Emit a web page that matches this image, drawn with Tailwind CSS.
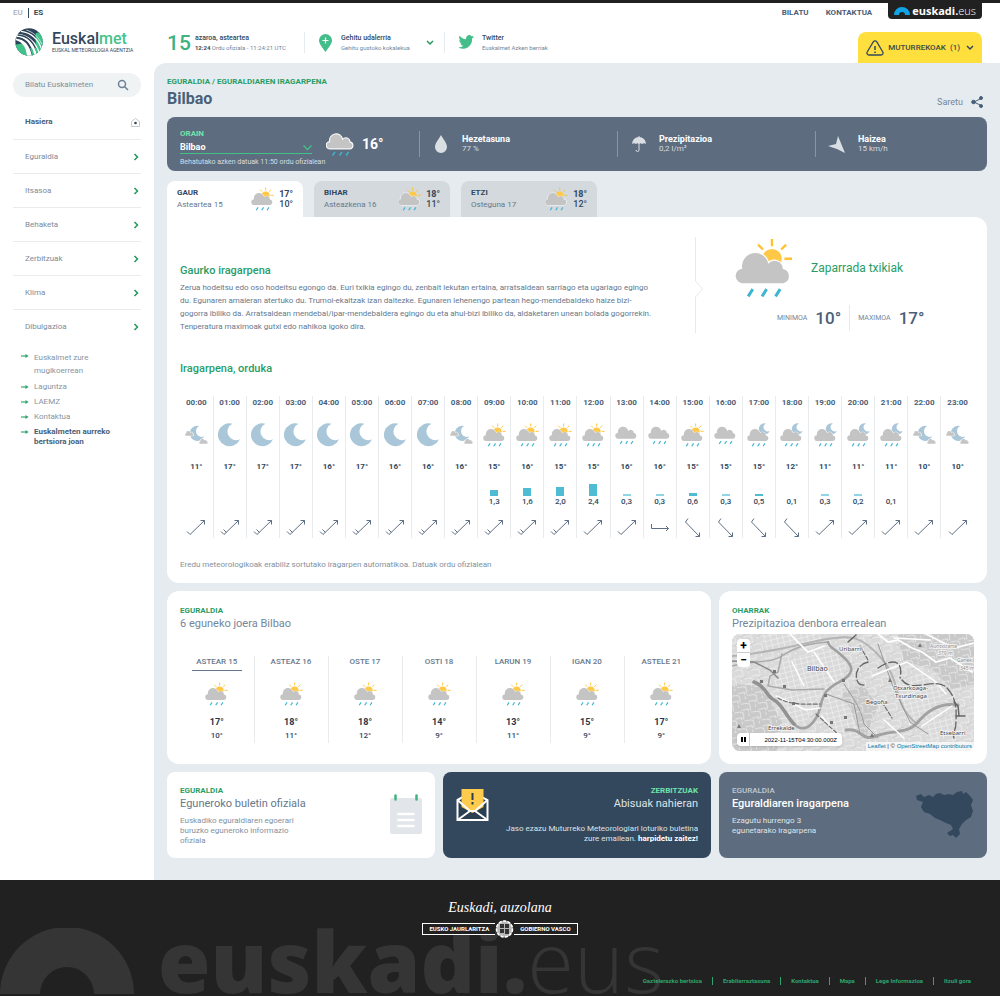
<!DOCTYPE html>
<html lang="eu">
<head>
<meta charset="utf-8">
<meta name="viewport" content="width=device-width, initial-scale=1">
<title>Euskalmet - Eguraldiaren iragarpena - Bilbao</title>
<script src="https://cdn.jsdelivr.net/npm/@tailwindcss/browser@4"></script>
</head>
<body class="bg-white font-['Roboto','Liberation_Sans',sans-serif] text-[8px] leading-[10px] text-[#75869a]">

<!-- Shared icon definitions -->
<svg class="hidden" aria-hidden="true">
  <defs>
    <path id="cloud-shape" d="M22 136 A22 22 0 0 1 18 92 A40 40 0 0 1 97 77 A25 25 0 0 1 141 93 A22 22 0 0 1 143 136 Z"/>
    <g id="rain-shape" stroke="#3fb5d3" stroke-width="9" fill="none"><path d="M50 154 36 176M92 154 78 176M133 154 119 176"/></g>
    <path id="moon-shape" d="M44 1 A36 36 0 1 0 68 50 A27 27 0 0 1 44 1 Z"/>
    <symbol id="sunrain" viewBox="-4 0 176 180">
      <circle cx="108" cy="62" r="30" fill="#ffc947"/>
      <path d="M108 2v22M66 19l15 15M151 19l-15 15M146 62h23" stroke="#ffc12e" stroke-width="7" fill="none"/>
      <use href="#cloud-shape" fill="#c4c4c4" stroke="#ffffff" stroke-width="7" paint-order="stroke"/>
      <use href="#rain-shape"/>
    </symbol>
    <symbol id="rain" viewBox="-4 18 176 180">
      <use href="#cloud-shape" fill="#c4c4c4"/><use href="#rain-shape"/>
    </symbol>
    <symbol id="moonrain" viewBox="-4 0 176 180">
      <use href="#moon-shape" transform="translate(88 0) scale(1.2)" fill="#a9c7d8"/>
      <use href="#cloud-shape" fill="#c4c4c4" stroke="#ffffff" stroke-width="7" paint-order="stroke"/>
      <use href="#rain-shape"/>
    </symbol>
    <symbol id="moon" viewBox="-1 0 72 73"><use href="#moon-shape" fill="#a9c7d8"/></symbol>
    <symbol id="mooncloud" viewBox="-4 0 176 180">
      <use href="#moon-shape" transform="translate(34 20) scale(1.6)" fill="#a9c7d8"/>
      <g fill="#c4c4c4" stroke="#ffffff" stroke-width="20" paint-order="stroke">
        <use href="#cloud-shape" transform="translate(-2 42) scale(.4)" />
        <use href="#cloud-shape" transform="translate(106 102) scale(.4)"/>
      </g>
    </symbol>
    <symbol id="wind1" viewBox="0 0 20 20"><path d="M1 13.500 4 16.500 18.500 2.500M14.500 2.500h4v4" fill="none" stroke="#5d6f84"/></symbol>
    <symbol id="wind2" viewBox="0 0 20 20"><path d="M1 13.500 4 16.500 18.500 2.500M14.500 2.500h4v4M3.500 11.500l3 3" fill="none" stroke="#5d6f84"/></symbol>
    <symbol id="windR" viewBox="0 0 20 20"><path d="M1.500 6v4.500h17M16 8l2.500 2.500-2.500 2.500" fill="none" stroke="#5d6f84"/></symbol>
    <symbol id="windD" viewBox="0 0 20 20"><path d="M5 .5 2.500 4 16.500 18.500M16.500 14.500v4h-4" fill="none" stroke="#5d6f84"/></symbol>
    <symbol id="chev" viewBox="0 0 8 8"><path d="M2.500 1 5.500 4 2.500 7" fill="none" stroke="#23975c" stroke-width="1.500"/></symbol>
    <symbol id="arrow" viewBox="0 0 9 6"><path d="M0 3h7" stroke="#2fa56c" stroke-width="1.300"/><path d="M5 .8 8.500 3 5 5.200z" fill="#2fa56c"/></symbol>
  </defs>
</svg>

<div class="h-[3px] bg-[#212121]"></div>

<div class="flex">
  <aside class="w-[154px] shrink-0 px-[13px]">
    <div class="flex h-5 items-center gap-[5px] text-[8px] font-medium">
      <a href="#" class="text-[#a9b0b8]">EU</a><span class="h-[10px] w-px bg-[#33485d]"></span><a href="#" class="font-bold text-[#33485d]">ES</a>
    </div>
    <a href="#" class="mt-[5px] flex items-center gap-[9px] pl-[2px]">
      <svg class="size-7 shrink-0" viewBox="0 0 84 84" aria-hidden="true">
        <defs><clipPath id="globe"><circle cx="42" cy="42" r="41"/></clipPath></defs>
        <g clip-path="url(#globe)">
          <rect width="84" height="84" fill="#2c4358"/>
          <path d="M62 16 84 10V84H62Z" fill="#3fc38a"/>
          <path d="M0 50 26 46 38 84H0Z" fill="#3fc38a"/>
          <path d="M4 18C38 16 66 40 78 84H36C32 56 22 42 2 36Z" fill="#fff"/>
          <path d="M8 21C36 22 58 42 69 82" fill="none" stroke="#2c4358" stroke-width="4"/>
          <path d="M4 29C28 30 46 48 54 84" fill="none" stroke="#2c4358" stroke-width="6"/>
          <path d="M48 60 56 84M62 60 70 84" fill="none" stroke="#3fc38a" stroke-width="6"/>
          <path d="M18 10C48 14 70 34 80 64" fill="none" stroke="#fff" stroke-width="4"/>
          <path d="M34 6C54 12 70 26 80 48" fill="none" stroke="#fff" stroke-width="2"/>
        </g>
      </svg>
      <span class="flex flex-col whitespace-nowrap">
        <span class="text-[16px] font-medium leading-[17px] text-[#33485d]">Euskal<span class="text-[#45c38b]">met</span></span>
        <span class="text-[5px] leading-[7px] text-[#33485d]">EUSKAL METEOROLOGIA AGENTZIA</span>
      </span>
    </a>
    <form class="mt-[17px] flex h-6 items-center rounded-full bg-[#eff3f4] pl-3 pr-3">
      <input type="search" aria-label="Bilatu Euskalmeten" placeholder="Bilatu Euskalmeten" class="w-full min-w-0 bg-transparent text-[8px] outline-none placeholder:text-[#7d8e9f]">
      <button type="button" aria-label="Bilatu"><svg class="size-3" viewBox="0 0 12 12" fill="none" stroke="#6d8299" stroke-width="1.500"><circle cx="5" cy="5" r="3.500"/><path d="M7.500 7.500 11 11"/></svg></button>
    </form>
    <nav id="menu" class="mt-2 flex flex-col" aria-label="Menua"></nav>
    <ul id="links" class="mt-2 flex flex-col gap-[5px] pl-2 pr-6"></ul>
  </aside>

  <div class="min-w-0 flex-1">
    <header class="flex h-[60px] flex-col justify-between pl-[13px] pr-[18px]">
      <div class="flex h-4 items-start justify-end text-[8px] font-bold text-[#4a6078]">
        <a href="#" class="mr-[17px] pt-[5px]">BILATU</a>
        <a href="#" class="mr-4 pt-[5px]">KONTAKTUA</a>
        <a href="#" class="flex h-4 items-center gap-[2px] rounded-b bg-[#212121] px-[6px] font-['Open_Sans',sans-serif] text-[11px] leading-[14px] text-white">
          <svg class="h-2 w-4" viewBox="0 0 16 8" aria-hidden="true"><path d="M0 8A8 8 0 0 1 16 8H11A3 3 0 0 0 5 8Z" fill="#11a4e4"/></svg>
          <span class="font-bold">euskadi.<span class="font-light">eus</span></span>
        </a>
      </div>
      <div class="flex items-end justify-between">
        <div class="mb-[10px] flex h-[21px] items-center whitespace-nowrap">
          <div class="flex h-full w-[138px] items-center gap-1 border-r border-[#e6ebef]">
            <span class="text-[21px] font-medium leading-[22px] text-[#40b27f]">15</span>
            <span class="text-[6px]"><b class="block text-[7px] font-medium text-[#33485d]">azaroa, asteartea</b><b class="text-[#33485d]">12:24</b> Ordu ofiziala - 11:24:21 UTC</span>
          </div>
          <button type="button" class="flex h-full w-[140px] items-center border-r border-[#e6ebef] pl-[14px] pr-[10px] text-left text-[6px]">
            <svg class="mr-[9px] h-[18px] w-[13px]" viewBox="0 0 13 18"><path d="M6.500 18C3 13 0 9.500 0 6.500a6.500 6.500 0 0 1 13 0C13 9.500 10 13 6.500 18Z" fill="#43bd89"/><path d="M6.500 3.500v6M3.500 6.500h6" stroke="#fff" stroke-width="1.200"/></svg>
            <span class="flex-1"><b class="block text-[7px] font-medium text-[#33485d]">Gehitu udalerria</b>Gehitu gustoko kokalekua</span>
            <svg class="h-[6px] w-2" viewBox="0 0 8 6"><path d="M1 1l3 3 3-3" fill="none" stroke="#23975c" stroke-width="1.500"/></svg>
          </button>
          <a href="#" class="flex h-full items-center gap-2 pl-[13px] text-[6px]">
            <svg class="h-[15px] w-4" viewBox="2 3 21 18" preserveAspectRatio="none"><path d="M23 5.100a8.600 8.600 0 0 1-2.400.7 4.200 4.200 0 0 0 1.800-2.300c-.8.500-1.700.8-2.600 1A4.100 4.100 0 0 0 12.700 8.200 11.700 11.700 0 0 1 4.200 3.900a4.100 4.100 0 0 0 1.300 5.500 4 4 0 0 1-1.900-.5c0 2 1.400 3.700 3.300 4.100a4 4 0 0 1-1.800.1 4.100 4.100 0 0 0 3.800 2.800A8.300 8.300 0 0 1 2.500 17.600a11.700 11.700 0 0 0 18-10.400A8.300 8.300 0 0 0 23 5.100Z" fill="#43bd89"/></svg>
            <span><b class="block text-[7px] font-medium text-[#33485d]">Twitter</b>Euskalmet Azken berriak</span>
          </a>
        </div>
        <button type="button" class="flex h-[31px] items-center whitespace-nowrap rounded-t-lg bg-[#ffdf3d] px-2 text-[8px] font-medium text-[#3c4a45]">
          <svg class="mr-1 h-4 w-[18px]" viewBox="0 0 18 16" fill="none" stroke="#33485d"><path d="M7.400 1.700a2 2 0 0 1 3.300 0L16.800 12a2 2 0 0 1-1.800 3H3a2 2 0 0 1-1.800-3Z" stroke-width="1.300"/><path d="M9 6v4M9 11.500V13" stroke-width="1.500"/></svg>
          <span>MUTURREKOAK &nbsp;(1)</span>
          <svg class="ml-[6px] h-[6px] w-2" viewBox="0 0 8 6"><path d="M1 1l3 3 3-3" fill="none" stroke="#33485d" stroke-width="1.500"/></svg>
        </button>
      </div>
    </header>

    <main class="rounded-tl-xl bg-[#e6ebef] px-[13px] pb-[22px] pt-[14px]">
      <nav class="text-[8px] font-bold text-[#2a9d66]" aria-label="Ogi-mamiak"><a href="#">EGURALDIA</a> / <a href="#">EGURALDIAREN IRAGARPENA</a></nav>
      <div class="flex h-[30px] justify-between">
        <h1 class="pt-[2px] text-[16px] font-bold leading-5 text-[#4a6078]">Bilbao</h1>
        <button type="button" class="flex h-[30px] items-center gap-2 pr-1 text-[9px]">Saretu
          <svg class="size-3" viewBox="0 0 12 12" fill="#4a6078" stroke="#4a6078"><path d="M10 2.500 3 6l7 3.500" fill="none"/><circle cx="10" cy="2" r="1.500"/><circle cx="2.500" cy="6" r="1.800"/><circle cx="10" cy="10" r="1.500"/></svg>
        </button>
      </div>

      <!-- Current conditions -->
      <section class="flex h-[54px] items-center rounded-lg bg-[#5d6d7f] text-[8px] text-[#d6dce2]" aria-label="Orain">
        <div class="flex w-[252px] items-center pl-[13px]">
          <div class="w-[132px] pt-2">
            <label for="town" class="block font-bold text-[#6fe3ab]">ORAIN</label>
            <div class="relative mt-[2px] border-b border-[#40c287]">
              <select id="town" class="block h-3 w-full appearance-none bg-transparent text-[9px] font-bold leading-3 text-white"><option>Bilbao</option></select>
              <svg class="pointer-events-none absolute right-0 top-1 h-[6px] w-[9px]" viewBox="0 0 9 6"><path d="M.5 .5l4 4 4-4" fill="none" stroke="#40c287" stroke-width="1.300"/></svg>
            </div>
            <p class="mt-[3px] whitespace-nowrap text-[7px]">Behatutako azken datuak 11:50 ordu ofizialean</p>
          </div>
          <svg class="ml-[14px] h-7 w-[29px] shrink-0" viewBox="-4 30 176 152"><use href="#cloud-shape" fill="#c4c4c4" stroke="#f4f6f7" stroke-width="7"/><use href="#rain-shape"/></svg>
          <span class="ml-[7px] text-[14px] font-bold text-white">16°</span>
        </div>
        <div class="flex h-[26px] flex-1 items-center gap-[14px] border-l border-[#8996a4] pl-[14px]">
          <svg class="h-[18px] w-[14px]" viewBox="0 0 14 18"><path d="M7 0C9 4 13 8 13 12a6 6 0 0 1-12 0C1 8 5 4 7 0Z" fill="#dadfe3"/></svg>
          <div><b class="block text-[9px] text-white">Hezetasuna</b>77 %</div>
        </div>
        <div class="flex h-[26px] flex-1 items-center gap-[13px] border-l border-[#8996a4] pl-[14px]">
          <svg class="h-[17px] w-[14px]" viewBox="0 0 14 17"><path d="M0 8A7 7 0 0 1 14 8Q12 6.500 10 8 8.500 6.500 7 8 5.500 6.500 4 8 2 6.500 0 8Z" fill="#dadfe3"/><path d="M7 0v14a1.500 1.500 0 0 1-3 0" stroke="#dadfe3" fill="none"/></svg>
          <div><b class="block text-[9px] text-white">Prezipitazioa</b>0,2 l/m²</div>
        </div>
        <div class="flex h-[26px] w-[172px] items-center gap-3 border-l border-[#8996a4] pl-3">
          <svg class="size-[18px]" viewBox="0 0 18 18"><path d="M10 1 17 18 9 14 0 11 8 9Z" fill="#dadfe3"/></svg>
          <div><b class="block text-[9px] text-white">Haizea</b>15 km/h</div>
        </div>
      </section>

      <div id="tabs" class="mt-[10px] flex gap-[11px]" role="tablist"></div>

      <section class="rounded-xl rounded-tl-none bg-white px-[13px] pb-[13px] pt-5">
        <div class="flex justify-between">
          <div class="pt-[27px]">
            <h2 class="text-[11px] font-medium leading-[14px] text-[#2a9d66]">Gaurko iragarpena</h2>
            <p class="mt-[3px] whitespace-nowrap text-[8px] leading-[13px] text-[#66788c]">Zerua hodeitsu edo oso hodeitsu egongo da. Euri txikia egingo du, zenbait lekutan ertaina, arratsaldean sarriago eta ugariago egingo<br>du. Egunaren amaieran atertuko du. Trumoi-ekaitzak izan daitezke. Egunaren lehenengo partean hego-mendebaldeko haize bizi-<br>gogorra ibiliko da. Arratsaldean mendebal/ipar-mendebaldera egingo du eta ahul-bizi ibiliko da, aldaketaren unean bolada gogorrekin.<br>Tenperatura maximoak gutxi edo nahikoa igoko dira.</p>
          </div>
          <div class="flex w-[280px] shrink-0">
            <svg class="h-24 w-[9px] shrink-0" viewBox="0 0 9 96" fill="none" stroke="#e6eaed"><path d="M1.500 0v44l7 8-7 8v36"/></svg>
            <div class="flex-1 pl-8">
              <div class="flex items-center gap-[18px]">
                <svg class="h-[62px] w-[58px]"><use href="#sunrain"/></svg>
                <p class="text-[12px] leading-4 text-[#2a9d66]">Zaparrada txikiak</p>
              </div>
              <div class="mt-[6px] flex items-center pl-[42px] text-[7px]">
                <span>MINIMOA</span><span class="ml-2 text-[17px] font-medium leading-[26px] text-[#4a6078]">10°</span>
                <span class="mx-[8px] h-[26px] w-px bg-[#e6eaed]"></span>
                <span>MAXIMOA</span><span class="ml-2 text-[17px] font-medium leading-[26px] text-[#4a6078]">17°</span>
              </div>
            </div>
          </div>
        </div>

        <h2 class="mt-[29px] text-[11px] font-medium leading-[14px] text-[#2a9d66]">Iragarpena, orduka</h2>
        <table class="mt-5 w-full table-fixed border-collapse text-center"><tbody id="hours"></tbody></table>
        <p class="mt-[22px] text-[8px] text-[#8391a0]">Eredu meteorologikoak erabiliz sortutako iragarpen automatikoa. Datuak ordu ofizialean</p>
      </section>

      <div class="mt-2 grid grid-cols-3 gap-2">
        <section class="col-span-2 rounded-xl bg-white px-[13px] pt-[15px]">
          <p class="font-bold text-[#2a9d66]">EGURALDIA</p>
          <h2 class="text-[11px] leading-4">6 eguneko joera Bilbao</h2>
          <table class="mt-6 w-full table-fixed border-collapse text-center"><tbody id="days"></tbody></table>
        </section>

        <section class="rounded-xl bg-white px-[13px] pb-[13px] pt-[15px]">
          <p class="font-bold text-[#2a9d66]">OHARRAK</p>
          <h2 class="text-[11px] leading-4">Prezipitazioa denbora errealean</h2>
          <div class="relative mt-[2px] h-[117px] overflow-hidden rounded-lg bg-[#dfdfdf]">
            <svg class="h-full w-full" viewBox="0 0 242 117" preserveAspectRatio="xMidYMid slice" role="img" aria-label="Bilboko mapa">
              <defs>
                <pattern id="blocks" width="6" height="5" patternUnits="userSpaceOnUse" patternTransform="rotate(-14)"><rect width="6" height="5" fill="#dadada"/><path d="M0 0H6M0 0V5" stroke="#f8f8f8"/></pattern>
                <pattern id="rough" width="13" height="11" patternUnits="userSpaceOnUse" patternTransform="rotate(37)"><path d="M0 4q4-5 7 0t6 0M2 11l4-5 5 5" fill="none" stroke="#f6f6f6" stroke-width=".8"/><path d="M8 9l3-5" stroke="#c6c6c6"/></pattern>
              </defs>
              <rect width="242" height="117" fill="#dadada"/>
              <path d="M0 50 30 52 50 88 45 117H0ZM110 60l20-10 16 22-12 30-14-14ZM165 0h77v50l-22 5-20-20-28-8Z" fill="#c9c9c9"/>
              <rect width="242" height="117" fill="url(#rough)"/>
              <path d="M30 0h60l-5 12-50 6ZM52 26 100 14l15 18-10 24-30 10-36-12ZM50 62l36-4-12 34-18-4ZM92 60l24 10 12 30-30 10ZM168 50l24-12 20 16-10 30-26 8Z" fill="url(#blocks)"/>
              <path d="M192 94l34-18-6 18-24 18Z" fill="url(#blocks)"/>
              <g fill="none" stroke-linecap="round">
                <path d="M0 22C30 20 60 12 90 6S130 2 150 25 160 70 185 90" stroke="#b4b4b4" stroke-width="2"/>
                <path d="M0 32C20 26 38 30 50 22S72 10 96 8M50 20 46 38 38 42 36 52 60 56 92 55" stroke="#a9a9a9" stroke-width="1.500"/>
                <path d="M0 27 22 28 38 36 46 44" stroke="#888" stroke-width="1.500"/>
                <path d="M22 48C34 52 34 62 42 66S54 82 62 90 78 94 84 84 88 66 94 58 110 48 116 42 120 30 108 20 98 14 96 8" stroke="#a0a0a0" stroke-width="2.500"/>
                <path d="M22 48C34 52 34 62 42 66S54 82 62 90" stroke="#929292" stroke-width="3.500"/>
                <path d="M114 96C132 94 128 108 144 102S176 100 186 88 208 68 226 71" stroke="#a2a2a2" stroke-width="3"/>
                <path d="M94 60 122 70 128 100M112 50C122 66 128 72 132 90L146 104M146 10 160 50 178 88 196 100" stroke="#999"/>
                <path d="M60 28l12 24 M82 18l20 30M44 62 74 76 88 74M90 82l20 26M140 42 175 28 204 48 214 60M190 92l30-20M152 86 172 104" stroke="#fff" stroke-width="1.500"/>
                <path d="M146 0 156 8 166 6 180 14 190 18 204 28 218 24 240 38M162 4 198 6M58 0l18 18 16-6M194 0l28 14 20-5" stroke="#fff" stroke-width="1.700"/>
                <path d="M136 28C120 32 122 52 132 51M146 34C160 24 172 26 168 44M170 46C180 60 204 42 215 54S224 78 224 88 220 98 222 104" stroke="#656565" stroke-width="1.300" stroke-dasharray="9 3"/>
                <path d="M46 64C60 72 78 70 88 70M84 80 110 104M150 68 160 84M128 12l8 14" stroke="#707070" stroke-width="1.200" stroke-dasharray="4 2"/>
                <path d="M116 8l8-7M222 68l4 4 1 10M224 82h9" stroke="#656565" stroke-width="1.500"/>
              </g>
              <path d="M28 46h3v3h-3zM41 36h3v3h-3zM51 51h3v3h-3zM60 68h3v3h-3zM92 60h3v3h-3zM110 45h3v3h-3zM98 87h3v3h-3zM112 82h3v3h-3zM156 48l2-4 2 4zM138 103l2-4 2 4zM186 13l2-4 2 4zM5 94l2-4 2 4z" fill="#777"/>
              <g font-family="Noto Sans, sans-serif" font-size="7" fill="#454545" stroke="#f5f5f5" stroke-width="1.500" paint-order="stroke">
                <text x="75" y="37">Bilbao</text>
                <g font-size="6">
                  <text x="107" y="17">Uribarri</text><text x="134" y="70">Begoña</text><text x="161" y="56">Otxarkoaga-</text><text x="163" y="64">Txurdinaga</text><text x="36" y="96">Errekalde</text><text x="208" y="101">Etxebarri</text>
                </g>
                <g font-size="5" fill="#8b8b8b"><text x="198" y="14">Auntxizarte</text><text x="206" y="21">379 m</text><text x="225" y="28">Ganek</text><text x="228" y="36">345 m</text></g>
              </g>
            </svg>
            <div class="absolute left-[5px] top-[5px] flex flex-col overflow-hidden rounded-sm bg-white text-[12px] font-bold leading-[14px] text-black">
              <button type="button" aria-label="Hurbildu" class="h-[14px] w-[13px] border-b border-[#ccc]">+</button>
              <button type="button" aria-label="Urrundu" class="h-[14px] w-[13px]">−</button>
            </div>
            <div class="absolute bottom-[5px] left-[5px] flex h-[13px] w-[105px] items-center rounded-sm bg-white font-['Liberation_Sans',sans-serif] text-[6px] text-black shadow">
              <button type="button" aria-label="Pausatu" class="flex h-full w-[13px] items-center justify-center gap-px border-r border-[#ccc]"><span class="h-[5px] w-[2px] bg-black"></span><span class="h-[5px] w-[2px] bg-black"></span></button>
              <span class="flex-1 pr-[5px] text-right">2022-11-15T04:30:00.000Z</span>
            </div>
            <div class="absolute bottom-0 right-0 whitespace-nowrap bg-white/70 px-[2px] font-['Liberation_Sans',sans-serif] text-[6px] leading-[9px] text-[#333]"><a href="#" class="text-[#0078a8]">Leaflet</a> | © <a href="#" class="text-[#0078a8]">OpenStreetMap contributors</a></div>
          </div>
        </section>

        <a href="#" class="flex h-[86px] justify-between rounded-lg bg-white px-[13px] pt-[14px]">
          <span class="w-[125px] text-[#8391a0]">
            <b class="block text-[#2a9d66]">EGURALDIA</b>
            <span class="block whitespace-nowrap text-[11px] leading-4 text-[#66788c]">Eguneroko buletin ofiziala</span>
            <span class="mt-1 block">Euskadiko eguraldiaren egoerari<br>buruzko eguneroko informazio<br>ofiziala</span>
          </span>
          <svg class="mt-2 h-10 w-8" viewBox="0 0 32 40"><rect y="4" width="32" height="36" rx="2" fill="#e2e6ea"/><path d="M5.500 1.500v4M26.500 1.500v4" stroke="#40b27f" stroke-width="2.500" stroke-linecap="round"/><path d="M8.500 20h15M8.500 26h15M8.500 32h15" stroke="#fff" stroke-width="2.500" stroke-linecap="round"/></svg>
        </a>
        <a href="#" class="flex h-[86px] justify-between rounded-lg bg-[#33485d] px-[13px] pt-[14px] text-[#dde3e8]">
          <svg class="mt-[1px] h-9 w-[33px] shrink-0" viewBox="0 0 33 36"><path d="M1.500 13 16 5l15.500 8v20h-30Z" fill="#2b3f53" stroke="#fff" stroke-width="2"/><path d="M5.500 2h22v18L16.500 26 5.500 20Z" fill="#ffcb4d"/><path d="M1.500 13 14 24 1.500 33M31.500 13 19 24l12.500 9M13 24h7" fill="none" stroke="#fff" stroke-width="2"/><path d="M16.500 6v7M16.500 15v2.500" stroke="#2b3f53" stroke-width="2"/></svg>
          <span class="text-right">
            <b class="block text-[#6fe3ab]">ZERBITZUAK</b>
            <span class="block text-[11px] leading-4">Abisuak nahieran</span>
            <span class="mt-3 block whitespace-nowrap">Jaso ezazu Muturreko Meteorologiari loturiko buletina<br>zure emailean. <b class="text-white">harpidetu zaitez!</b></span>
          </span>
        </a>
        <a href="#" class="flex h-[86px] justify-between rounded-lg bg-[#5d6d7f] px-[13px] pt-[14px] text-[#dde3e8]">
          <span>
            <span class="block font-medium text-[#c1c9d1]">EGURALDIA</span>
            <b class="block whitespace-nowrap text-[11px] font-medium leading-4 text-white">Eguraldiaren iragarpena</b>
            <span class="mt-1 block">Ezagutu hurrengo 3<br>egunetarako iragarpena</span>
          </span>
          <svg class="mt-[5px] h-[48px] w-[58px]" viewBox="0 0 58 48"><path d="M0 5 5 3 8 6 13 4 17 6 20 3 24 2 28 4 33 3 37 4 41 1 46 0 47 3 50 1 54 5 57 9 55 14 57 20 55 26 50 29 46 33 43 38 44 43 40 47 37 44 34 45 31 42 34 40 37 38 35 34 30 32 24 29 19 27 14 23 8 21 5 16 7 11 4 10 1 9Z" fill="#33485d"/></svg>
        </a>
      </div>
    </main>
  </div>
</div>

<footer class="relative h-[116px] overflow-hidden bg-[#212121]">
  <div class="pointer-events-none absolute inset-x-0 bottom-[2px] flex items-end text-[#353535]" aria-hidden="true">
    <svg class="h-[66px] w-[134px] shrink-0" viewBox="0 0 134 66"><path d="M0 66A67 67 0 0 1 134 66H94A27 27 0 0 0 40 66Z" fill="#353535"/></svg>
    <span class="ml-[24px] font-['Open_Sans',sans-serif] text-[85px] font-extrabold leading-[68px]">euskadi.<span class="font-light">eus</span></span>
  </div>
  <div class="relative flex h-full flex-col items-center pt-[20px]">
    <p class="font-['Liberation_Serif',serif] text-[14px] italic leading-4 text-white">Euskadi, auzolana</p>
    <div class="mt-1 flex items-center text-[6px] font-bold text-white">
      <span class="border border-r-0 border-white bg-[#212121] px-[6px]">EUSKO JAURLARITZA</span>
      <svg class="h-[18px] w-[19px]" viewBox="0 0 19 18"><circle cx="9.500" cy="9" r="8.500" fill="#b8b8b8"/><path d="M5 4h4v4H5zM10 4h4v4h-4zM5 9h4v4H5zM10 9h4v5h-4z" fill="#333"/><circle cx="9.500" cy="9" r="8" fill="none" stroke="#fff" stroke-dasharray="3 1.500" stroke-width="1.500"/></svg>
      <span class="border border-l-0 border-white bg-[#212121] px-[6px]">GOBIERNO VASCO</span>
    </div>
    <nav id="foot" class="absolute bottom-[11px] right-[29px] flex divide-x divide-[#2fa56c] text-[6px] font-bold leading-2 text-[#2fa56c]" aria-label="Oina"></nav>
  </div>
</footer>

<script>
const $ = id => document.getElementById(id);
const icon = (name, cls) => `<svg class="${cls}" aria-hidden="true"><use href="#${name}"/></svg>`;

$('menu').innerHTML = ['Hasiera','Eguraldia','Itsasoa','Behaketa','Zerbitzuak','Klima','Dibulgazioa'].map((t, i) => i === 0
  ? `<a href="#" class="flex h-[34px] items-center justify-between pl-3 pr-[1px] font-bold text-[#4a6078]">${t}<svg class="size-[9px]" viewBox="0 0 9 9"><path d="M4.500 .5 8.500 3.500v5h-8v-5Z" fill="none" stroke="#c3cad1"/><circle cx="4.500" cy="5" r="1.300" fill="#33485d"/></svg></a>`
  : `<a href="#" class="flex h-[34px] items-center justify-between border-t border-[#e9ecee] pl-3 pr-[1px] text-[#7d8b99]">${t}${icon('chev', 'size-2')}</a>`).join('');

$('links').innerHTML = ['Euskalmet zure<br>mugikoerrean','Laguntza','LAEMZ','Kontaktua','Euskalmeten aurreko<br>bertsiora joan'].map((t, i) =>
  `<li><a href="#" class="flex gap-[5px] whitespace-nowrap ${i === 4 ? 'leading-[10px] font-bold text-[#4a6078]' : i === 0 ? 'leading-[13px] text-[#8995a1]' : 'text-[#8995a1]'}">${icon('arrow', 'mt-[2px] h-[6px] w-2 shrink-0')}<span>${t}</span></a></li>`).join('');

$('tabs').innerHTML = [['GAUR','Asteartea 15',17,10],['BIHAR','Asteazkena 16',18,11],['ETZI','Osteguna 17',18,12]].map((d, i) =>
  `<button type="button" role="tab" aria-selected="${i === 0}" class="flex h-9 w-[136px] items-center rounded-t-lg px-[10px] text-left ${i === 0 ? 'bg-white' : 'bg-[#d3d9dc]'}">
    <span class="w-[74px] whitespace-nowrap text-[8px] leading-3 text-[#66788c]"><b class="block text-[#33485d]">${d[0]}</b>${d[1]}</span>
    ${icon('sunrain', 'h-6 w-[23px]')}
    <span class="flex-1 text-right text-[9px] font-medium leading-[10px] text-[#33485d]"><b class="block">${d[2]}°</b>${d[3]}°</span>
  </button>`).join('');

const temps = [11,17,17,17,16,17,16,16,16,15,16,15,15,16,16,15,15,15,12,11,11,11,10,10];
const rain = ['','','','','','','','','','1,3','1,6','2,0','2,4','0,3','0,3','0,6','0,3','0,5','0,1','0,3','0,2','0,1','',''];
const bars = [0,0,0,0,0,0,0,0,0,6,8,9,12,2,2,3,2,2,0,2,2,0,0,0];
const sky = [...'cmmmmmmmcssssrrsrnnnnncc'];
const skyIcon = {c:'mooncloud', m:'moon', s:'sunrain', r:'rain', n:'moonrain'};
const wind = [...'122222222222' + '11RDDDD11111'];
const windIcon = {1:'wind1', 2:'wind2', R:'windR', D:'windD'};
const row = (cls, cells, tag = 'td') => `<tr class="${cls}">${cells.map(c => `<${tag} class="border-l border-[#e9ecee] p-0 first:border-l-0">${c}</${tag}>`).join('')}</tr>`;
$('hours').innerHTML =
  row('h-[13px] text-[8px] font-medium text-[#4a6078]', temps.map((_, i) => String(i).padStart(2, '0') + ':00'), 'th') +
  row('h-[52px]', sky.map(s => icon(skyIcon[s], 'mx-auto h-6 w-[23px]'))) +
  row('h-3 text-[8px] font-bold text-[#33485d]', temps.map(t => t + '°')) +
  row('h-[34px] align-bottom text-[8px] font-medium text-[#33485d]', rain.map((r, i) => `<span class="mx-auto block w-2 ${r === '0,3' || r === '0,2' ? 'bg-[#8fd5e3]' : 'bg-[#4fbcd4]'}" style="height:${bars[i]}px"></span><span class="block pt-px">${r}</span>`)) +
  row('h-[31px]', wind.map(w => icon(windIcon[w], 'mx-auto mt-[11px] size-5')));

const days = [['ASTEAR 15',17,10],['ASTEAZ 16',18,11],['OSTE 17',18,12],['OSTI 18',14,9],['LARUN 19',13,11],['IGAN 20',15,9],['ASTELE 21',17,9]];
$('days').innerHTML =
  row('h-4 text-[8px] text-[#66788c]', days.map((d, i) => `<span class="mx-auto block w-[50px] whitespace-nowrap border-b pb-[3px] font-medium ${i === 0 ? 'border-[#66788c]' : 'border-transparent'}">${d[0]}</span>`), 'th') +
  row('h-[43px]', days.map(() => icon('sunrain', 'mx-auto h-6 w-[23px]'))) +
  row('h-[13px] text-[9px] text-[#22384e]', days.map(d => `<b>${d[1]}°</b>`)) +
  row('h-[15px] text-[8px] font-medium text-[#33485d]', days.map(d => d[2] + '°'));

$('foot').innerHTML = ['Gaztelerazko bertsioa','Erabilerraztasuna','Kontaktua','Mapa','Lege Informazioa','Itzuli gora'].map(t => `<a href="#" class="px-[10px] last:pr-0">${t}</a>`).join('');
</script>
</body>
</html>
